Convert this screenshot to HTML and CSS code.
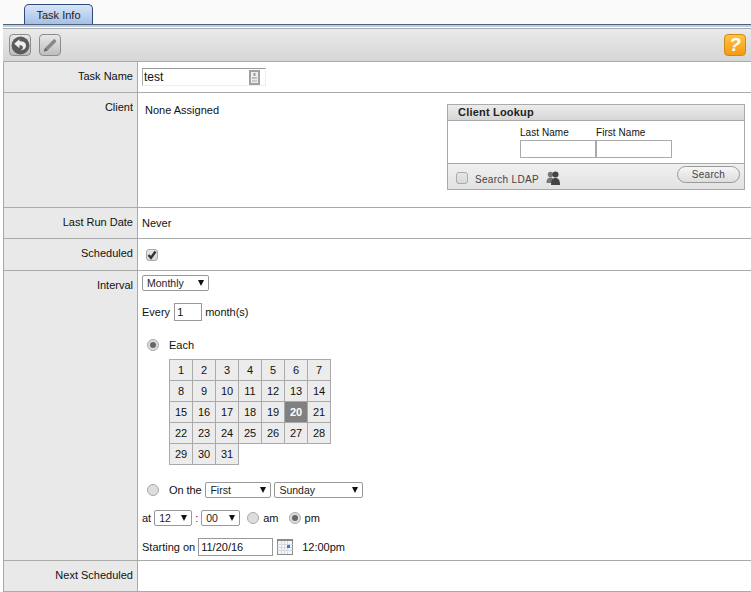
FILE: index.html
```html
<!DOCTYPE html>
<html lang="en">
<head>
<meta charset="utf-8">
<title>Task Info</title>
<link rel="stylesheet" href="styles.css">
</head>
<body>
<div class="tabbar"><div class="tab">Task Info</div></div>
<div class="tabline"></div>
<div class="toolbar">
  <div class="tool-left">
    <button class="tool"><svg width="19" height="19" viewBox="0 0 18 18"><circle cx="9" cy="9" r="8.500" fill="#5a5a5a"/><path d="M8 3 3 7.300 8 11.500V8.800c2 0 3.300.6 3.300 2 0 1-.8 1.900-2.300 2.700 3.200-.1 5.200-1.800 5.200-4.500C14.200 6.300 11.900 5 8 5z" fill="#eee"/></svg></button>
    <button class="tool"><svg width="16" height="16" viewBox="0 0 16 16"><path d="M2 14.500 3 11 11.500 2.500a1 1 0 0 1 1.500 0l1 1a1 1 0 0 1 0 1.500L5.500 13.500z" fill="#888"/><path d="M2 14.500 3 11l2.500 2.500z" fill="#5f5f5f"/></svg></button>
  </div>
  <div class="help">?</div>
</div>
<div class="row r-name">
  <div class="lab">Task Name</div>
  <div class="val name-val"><div class="namebox"><span>test</span><svg width="11" height="15" viewBox="0 0 11 15"><rect x="1" y="1" width="9" height="13" fill="#eee" stroke="#a0a0a0" stroke-width="2"/><rect x="4.500" y="3" width="2" height="3" fill="#999"/><rect x="3" y="7" width="5" height="2" fill="#bbb"/><rect x="3" y="10" width="5" height="2" fill="#ccc"/></svg></div></div>
</div>
<div class="row r-client">
  <div class="lab">Client</div>
  <div class="val client-val">
    <div class="none">None Assigned</div>
    <div class="lookup">
      <div class="lk-head">Client Lookup</div>
      <div class="lk-body">
        <div class="lk-col"><label>Last Name</label><div class="lk-input"></div></div>
        <div class="lk-col"><label>First Name</label><div class="lk-input"></div></div>
      </div>
      <div class="lk-foot">
        <div class="lk-ldap"><span class="check"></span><span class="ldap-text">Search LDAP</span>
          <svg width="15" height="14" viewBox="0 0 15 14"><circle cx="4.500" cy="3.500" r="2.700" fill="#777"/><path d="M.5 12c0-4 1.500-5.500 4-5.500S8 8 8 12z" fill="#777"/><circle cx="9.500" cy="3.500" r="3" fill="#444"/><path d="M5 14c0-5 1.500-7 4.500-7s4.500 2 4.500 7z" fill="#444"/></svg>
        </div>
        <button class="lk-btn">Search</button>
      </div>
    </div>
  </div>
</div>
<div class="row r-last">
  <div class="lab">Last Run Date</div>
  <div class="val plain">Never</div>
</div>
<div class="row r-sched">
  <div class="lab">Scheduled</div>
  <div class="val sched-val"><span class="check"><svg width="10" height="10" viewBox="0 0 10 10"><path d="M1.500 5 4 7.800 8.500 1.500" fill="none" stroke="#333" stroke-width="2.400"/></svg></span></div>
</div>
<div class="row r-int">
  <div class="lab">Interval</div>
  <div class="val int-val">
    <div class="sel w-month">Monthly<i></i></div>
    <div class="line every">Every <span class="num">1</span> month(s)</div>
    <div class="line each"><span class="radio on"></span><span>Each</span></div>
    <div class="cal">
      <span>1</span><span>2</span><span>3</span><span>4</span><span>5</span><span>6</span><span>7</span>
      <span>8</span><span>9</span><span>10</span><span>11</span><span>12</span><span>13</span><span>14</span>
      <span>15</span><span>16</span><span>17</span><span>18</span><span>19</span><span class="sel-day">20</span><span>21</span>
      <span>22</span><span>23</span><span>24</span><span>25</span><span>26</span><span>27</span><span>28</span>
      <span>29</span><span>30</span><span>31</span>
    </div>
    <div class="line onthe"><span class="radio"></span><span class="ot">On the</span><div class="sel w-first">First<i></i></div><div class="sel w-sun">Sunday<i></i></div></div>
    <div class="line at">at <div class="sel w-h">12<i></i></div><span class="colon">:</span><div class="sel w-m">00<i></i></div><span class="radio"></span><span>am</span><span class="radio on"></span><span>pm</span></div>
    <div class="line start">Starting on <span class="date">11/20/16</span>
      <svg class="calicon" width="16" height="16" viewBox="0 0 16 16"><rect x="0.500" y="0.500" width="15" height="15" fill="#f4f6fa" stroke="#8a8a8a"/><rect x="0" y="0" width="16" height="2" fill="#8a8a8a"/><path d="M.5 5.500h15M.5 8.500h15M.5 11.500h15M4.500 2v13M7.500 2v13M10.500 2v13" stroke="#d5d9e2"/><rect x="10" y="6" width="3" height="3" fill="#2a7fe8"/></svg>
      <span class="time">12:00pm</span></div>
  </div>
</div>
<div class="row r-next">
  <div class="lab">Next Scheduled</div>
  <div class="val"></div>
</div>
</body>
</html>
```
FILE: styles.css
```css
* { box-sizing: border-box; }
html, body { margin: 0; padding: 0; }
body { width: 751px; height: 592px; overflow: hidden; background: #fff; font-family: "Liberation Sans", Arial, sans-serif; font-size: 11px; color: #111; }
.tabbar { height: 24px; background: #fafafa; padding: 4px 0 0 24px; }
.tab { width: 69px; height: 20px; border: 1px solid #2f4a80; border-bottom: 0; border-radius: 5px 5px 0 0; background: linear-gradient(#d8e5f6, #a4c1e9); font-size: 11px; line-height: 20px; text-align: center; color: #222; }
.tabline { height: 5px; background: linear-gradient(#55606f 0, #55606f 1px, #b9cfe9 1px, #b9cfe9 3px, #fff 3px, #fff 4px, #aaa 4px); margin-left: 3px; }
.toolbar { height: 33px; margin-left: 3px; background: linear-gradient(#eaeaea, #d6d6d6); border-bottom: 1px solid #aaa; display: flex; justify-content: space-between; align-items: center; padding: 0 5px 0 6px; }
.tool-left { display: flex; gap: 8px; }
.tool { width: 22px; height: 22px; padding: 0; border: 1px solid #8c8c8c; border-radius: 4px; background: linear-gradient(#e8e8e8, #bdbdbd); display: flex; align-items: center; justify-content: center; }
.help { width: 22px; height: 22px; border: 1px solid #d08a10; border-radius: 4px; background: linear-gradient(#ffc24a, #f59a10); color: #fff; font: italic bold 19px/20px "Liberation Sans", sans-serif; text-align: center; }
.row { display: flex; margin-left: 3px; border-bottom: 1px solid #aaa; }
.lab { width: 135px; flex: none; background: #e9e9e9; border-left: 1px solid #aaa; border-right: 1px solid #aaa; text-align: right; padding: 8px 4px 0 0; font-size: 11px; }
.val { flex: 1; padding-left: 4px; font-size: 11px; }
.r-name { height: 31px; }
.r-client { height: 115px; }
.r-last { height: 31px; }
.r-sched { height: 32px; }
.r-int { height: 290px; }
.r-next { height: 31px; }
.name-val { padding-top: 6px; }
.namebox { width: 124px; height: 18px; border: 1px solid #eee; border-top-color: #999; border-left-color: #aaa; display: flex; justify-content: space-between; align-items: center; padding: 0 5px 0 1px; font-size: 12px; }
.client-val { display: flex; justify-content: space-between; padding: 11px 6px 0 7px; }
.lookup { width: 298px; height: 86px; border: 1px solid #aaa; display: flex; flex-direction: column; }
.lk-head { height: 16px; background: linear-gradient(#ececec, #d6d6d6); border-bottom: 1px solid #aaa; font-weight: bold; font-size: 11px; line-height: 15px; padding-left: 10px; letter-spacing: .2px; color: #222; }
.lk-body { height: 42px; display: flex; padding: 6px 0 0 72px; flex: none; }
.lk-col { width: 76px; font-size: 10px; }
.lk-col label { display: block; height: 13px; line-height: 12px; letter-spacing: .05px; }
.lk-input { height: 18px; border: 1px solid #aaa; }
.lk-foot { flex: 1; background: linear-gradient(#f0f0f0, #e2e2e2); border-top: 1px solid #aaa; display: flex; justify-content: space-between; padding: 2px 4px 0 8px; }
.lk-ldap { display: flex; align-items: center; height: 21px; font-size: 10px; color: #444; padding-top: 3px; }
.ldap-text { margin: 2px 7px 0 7px; letter-spacing: .3px; }
.lk-btn { width: 63px; height: 17px; border: 1px solid #999; border-radius: 9px; background: linear-gradient(#f6f6f6, #ddd); font: 10px "Liberation Sans", sans-serif; color: #444; padding: 0; letter-spacing: .3px; }
.check { display: inline-flex; align-items: center; justify-content: center; width: 12px; height: 12px; border: 1px solid #aaa; border-radius: 3px; background: linear-gradient(#e6e6e6, #d8d8d8); }
.plain { padding-top: 9px; }
.sched-val { padding: 10px 0 0 8px; }
.int-val { padding-top: 4px; }
.sel { display: inline-flex; align-items: center; justify-content: space-between; height: 16px; border: 1px solid #999; border-radius: 2px; background: #fff; padding: 0 4px; font-size: 10.500px; color: #222; vertical-align: middle; }
.sel i { width: 0; height: 0; border-left: 3.500px solid transparent; border-right: 3.500px solid transparent; border-top: 6px solid #111; }
.w-month { width: 67px; }
.w-first { width: 66px; }
.w-sun { width: 89px; margin-left: 3px; }
.w-h { width: 38px; margin-left: 3px; }
.w-m { width: 39px; }
.line { display: flex; align-items: center; }
.every { margin-top: 12px; height: 18px; gap: 3px; }
.num { width: 28px; height: 18px; border: 1px solid #999; padding-left: 2px; line-height: 16px; margin-left: 1px; }
.each { margin-top: 16px; height: 16px; padding-left: 5px; gap: 10px; }
.radio { width: 12px; height: 12px; border: 1px solid #aaa; border-radius: 50%; background: #ddd; display: inline-block; position: relative; flex: none; }
.radio.on::after { content: ""; position: absolute; left: 2px; top: 2px; width: 6px; height: 6px; border-radius: 50%; background: #666; }
.cal { width: 162px; margin: 6px 0 0 27px; display: grid; grid-template-columns: repeat(7, 23px); grid-auto-rows: 21px; border-top: 1px solid #aaa; border-left: 1px solid #aaa; }
.cal span { background: #ececec; border-right: 1px solid #aaa; border-bottom: 1px solid #aaa; text-align: center; line-height: 20px; font-size: 11px; }
.cal .sel-day { background: #808080; color: #fff; font-weight: bold; }
.onthe { margin-top: 17px; height: 16px; padding-left: 5px; }
.ot { margin: 0 4px 0 10px; letter-spacing: -.1px; }
.at { margin-top: 12px; height: 16px; }
.colon { margin: 0 3px; color: #606; }
.at .radio { margin: 0 4px 0 7px; }
.at .radio.on { margin-left: 10px; }
.start { margin-top: 12px; height: 18px; }
.date { width: 75px; height: 18px; border: 1px solid #999; margin-left: 3px; padding-left: 2px; line-height: 16px; }
.calicon { margin-left: 4px; }
.time { margin-left: 9px; }
```
